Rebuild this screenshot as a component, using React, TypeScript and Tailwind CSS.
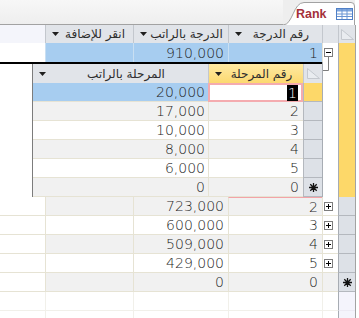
import React from "react";

// Fonts
const NUM = "font-['DejaVu_Sans',sans-serif] text-[14px] font-extralight text-[#1e1e1e] leading-none";
const AR = "font-['DejaVu_Sans',sans-serif] text-[12px] text-[#2e2e2e] leading-none";

// Colours
const BLUE = "bg-[#a7cdf0]";
const ROWGRAY = "bg-[#f1f1f1]";
const HEAD = "bg-[#e1e4e9]";
const SEL = "bg-[#dde1e7]";
const YELLOW = "bg-[#fdd869]";

const DropArrow = () => (
  <svg width="7" height="4" viewBox="0 0 7 4" className="shrink-0">
    <path d="M0 0h7L3.5 4z" fill="#1f1f1f" />
  </svg>
);

const SelectAll = () => (
  <svg width="13" height="11" viewBox="0 0 13 11">
    <path d="M0.5 0.5 L12.5 10.5 L0.5 10.5 Z" fill="#e9ecf0" stroke="#c4c8ce" />
  </svg>
);

const ExpandBox = ({ minus }: { minus?: boolean }) => (
  <svg width="9" height="9" viewBox="0 0 9 9" className="shrink-0">
    <rect x="0.5" y="0.5" width="8" height="8" fill="#fff" stroke="#7d7d7d" />
    <path d="M2 4.5h5" stroke="#000" />
    {!minus && <path d="M4.5 2v5" stroke="#000" />}
  </svg>
);

const Star = () => (
  <svg width="9" height="9" viewBox="0 0 9 9">
    <g stroke="#111" strokeWidth="1.3">
      <path d="M4.5 0v9M0 4.5h9M1.3 1.3l6.4 6.4M7.7 1.3l-6.4 6.4" />
    </g>
  </svg>
);

const TableIcon = () => (
  <svg width="17" height="12" viewBox="0 0 17 12">
    <rect x="0.5" y="0.5" width="16" height="11" fill="#fff" stroke="#4f7fc6" />
    <rect x="1" y="1" width="15" height="2.5" fill="#7fa6dd" />
    <path d="M1 6h15M1 8.5h15M6 1v10M11 1v10" stroke="#6b95d3" />
  </svg>
);

const HeaderCell = ({
  w,
  label,
  active,
  noBorder,
}: {
  w: string;
  label: string;
  active?: boolean;
  noBorder?: boolean;
}) => (
  <div
    className={`${w} h-full flex items-center pl-[6px] pr-[2px] ${noBorder ? "" : "border-l border-[#c3c7cd]"} ${
      active ? "bg-gradient-to-b from-[#fee9a2] to-[#fcd96f]" : HEAD
    }`}
  >
    <DropArrow />
    <span dir="rtl" className={`${AR} flex-1 text-center whitespace-nowrap`}>
      {label}
    </span>
  </div>
);

type MainRowProps = {
  bg: string;
  salary?: string;
  num?: string;
  expand?: boolean;
  sel: "gray" | "star" | "empty";
  pinkTop?: boolean;
  empty?: boolean;
};

const MainRow = ({ bg, salary, num, expand, sel, pinkTop, empty }: MainRowProps) => {
  const line = empty ? "border-[#f1f0ea]" : "border-[#e6e3d4]";
  return (
    <div className="flex h-[19px] shrink-0">
      <div className={`w-[45px] border-b ${line} bg-white`} />
      <div className={`w-[88px] border-l border-b ${line} ${bg}`} />
      <div className={`w-[95px] border-l border-b ${line} ${bg} flex items-center justify-end pr-[4px] ${NUM}`}>
        {salary}
      </div>
      <div
        className={`w-[94px] border-l border-b ${line} ${bg} flex items-center justify-end pr-[4px] ${NUM} ${
          pinkTop ? "border-t border-t-[#f3a3a7]" : ""
        }`}
      >
        {num}
      </div>
      <div
        className={`w-[16px] border-l border-b ${line} ${
          sel === "star" ? ROWGRAY : "bg-white"
        } flex items-center pl-[1px]`}
      >
        {expand && <ExpandBox />}
      </div>
      <div
        className={`w-[17px] border-l border-[#a7acb3] flex items-center justify-center ${
          sel === "empty" ? "bg-[#f4f4fc] border-b border-b-[#eceaf4]" : `${SEL} border-b border-b-[#b4b8be]`
        }`}
      >
        {sel === "star" && <Star />}
      </div>
      <div className="w-[4px] border-l border-[#a3a3a3] bg-white" />
    </div>
  );
};

const subRows = [
  { pay: "20,000", n: "1" },
  { pay: "17,000", n: "2" },
  { pay: "10,000", n: "3" },
  { pay: "8,000", n: "4" },
  { pay: "6,000", n: "5" },
  { pay: "0", n: "0" },
];

const mainRows = [
  { salary: "723,000", num: "2" },
  { salary: "600,000", num: "3" },
  { salary: "509,000", num: "4" },
  { salary: "429,000", num: "5" },
];

export default function App() {
  return (
    <div className="w-[359px] h-[318px] bg-white overflow-hidden flex flex-col">
      {/* Tab strip */}
      <div className="flex h-[25px] shrink-0">
        <div className="flex-1 bg-gradient-to-b from-[#f7f7f7] to-[#eeeeee] border-b border-[#a2a2a2]" />
        <div className="w-[72px] relative flex items-center pl-[13px] pt-[3px] bg-[#eeeeee]">
          <svg width="72" height="25" viewBox="0 0 72 25" className="absolute inset-0">
            <path
              d="M0 25 C10 25 10 2.5 21 2.5 H68 Q71.5 2.5 71.5 6 V25"
              fill="#ffffff"
              stroke="#a2a2a2"
            />
          </svg>
          <span className="relative font-['Liberation_Sans',sans-serif] text-[12.5px] font-bold text-[#a4303a]">
            Rank
          </span>
          <span className="relative ml-[9px]">
            <TableIcon />
          </span>
        </div>
        <div className="w-[4px] bg-white" />
      </div>

      {/* Main header */}
      <div className="flex h-[18px] shrink-0">
        <div className="w-[45px] bg-[#f4f5fb]" />
        <HeaderCell w="w-[88px]" label="انقر للإضافة" />
        <HeaderCell w="w-[95px]" label="الدرجة بالراتب" />
        <HeaderCell w="w-[94px]" label="رقم الدرجة" />
        <div className={`w-[16px] border-l border-[#c3c7cd] ${HEAD}`} />
        <div className={`w-[17px] border-l border-[#c3c7cd] ${HEAD} flex items-center justify-center`}>
          <SelectAll />
        </div>
        <div className="w-[4px] border-l border-[#a3a3a3] bg-white" />
      </div>

      {/* Row 1 (expanded) */}
      <div className="flex h-[19px] shrink-0">
        <div className="w-[45px] bg-white" />
        <div className={`w-[88px] border-l border-[#c9dff2] ${BLUE}`} />
        <div className={`w-[95px] border-l border-[#c9dff2] ${BLUE} flex items-center justify-end pr-[4px] ${NUM}`}>
          910,000
        </div>
        <div className={`w-[94px] border-l border-[#c9dff2] ${BLUE} flex items-center justify-end pr-[4px] ${NUM}`}>
          1
        </div>
        <div className="w-[16px] border-l border-[#e6e3d4] bg-white flex flex-col items-start pl-[1px] pt-[5px]">
          <ExpandBox minus />
          <div className="ml-[4px] w-px flex-1 bg-[#7d7d7d]" />
        </div>
        <div className={`w-[17px] border-l border-[#a7acb3] ${YELLOW}`} />
        <div className="w-[4px] border-l border-[#a3a3a3] bg-white" />
      </div>

      {/* Subdatasheet */}
      <div className="flex h-[135px] shrink-0">
        <div className="w-[322px] border-t-2 border-black flex">
          <div className="w-[32px] bg-white" />
          <div className="w-[290px] border-l border-[#7c7c7c] flex flex-col">
            <div className="flex h-[19px] shrink-0">
              <HeaderCell w="w-[175px]" label="المرحلة بالراتب" noBorder />
              <HeaderCell w="w-[95px]" label="رقم المرحلة" active />
              <div className={`w-[19px] border-l border-[#c3c7cd] ${HEAD} flex items-center justify-center`}>
                <SelectAll />
              </div>
            </div>
            {subRows.map((r, i) => {
              const first = i === 0;
              const last = i === subRows.length - 1;
              const bg = first ? BLUE : i % 2 === 1 ? ROWGRAY : "bg-white";
              return (
                <div key={i} className="flex h-[19px] shrink-0">
                  <div
                    className={`w-[175px] border-b border-[#e6e3d4] ${bg} flex items-center justify-end pr-[3px] ${NUM}`}
                  >
                    {r.pay}
                  </div>
                  {first ? (
                    <div className={`w-[95px] border-2 border-[#f4abaf] bg-white flex items-center justify-end pr-[3px] ${NUM}`}>
                      <span className="bg-black text-white px-[1px] py-[1px]">1</span>
                    </div>
                  ) : (
                    <div
                      className={`w-[95px] border-l border-b border-[#e6e3d4] ${bg} flex items-center justify-end pr-[4px] ${NUM}`}
                    >
                      {r.n}
                    </div>
                  )}
                  <div
                    className={`w-[19px] border-l border-b border-[#b4b8be] flex items-center justify-center ${
                      first ? YELLOW : SEL
                    }`}
                  >
                    {last && <Star />}
                  </div>
                </div>
              );
            })}
          </div>
        </div>
        <div className="w-[16px] border-l border-[#a7acb3] bg-white">
          <svg width="15" height="12" viewBox="0 0 15 12">
            <path d="M5.5 0V8.5H0" fill="none" stroke="#7d7d7d" />
          </svg>
        </div>
        <div className={`w-[17px] border-l border-[#a7acb3] ${YELLOW}`} />
        <div className="w-[4px] border-l border-[#a3a3a3] bg-white" />
      </div>

      {/* Remaining main rows */}
      {mainRows.map((r, i) => (
        <MainRow
          key={r.num}
          bg={i % 2 === 0 ? ROWGRAY : "bg-white"}
          salary={r.salary}
          num={r.num}
          expand
          sel="gray"
          pinkTop={i === 0}
        />
      ))}
      <MainRow bg={ROWGRAY} salary="0" num="0" sel="star" />
      <MainRow bg="bg-white" sel="empty" empty />
      <MainRow bg="bg-white" sel="empty" empty />
    </div>
  );
}
